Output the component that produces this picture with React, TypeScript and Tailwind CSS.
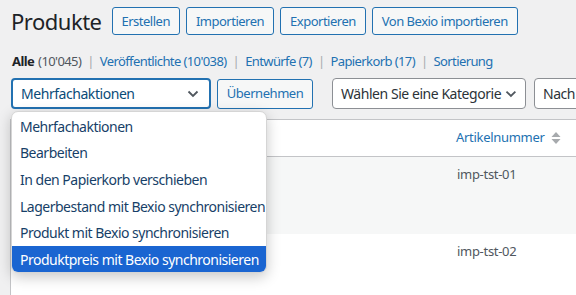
import React from "react";

const Chevron = ({ className = "" }: { className?: string }) => (
  <svg width="20" height="20" viewBox="0 0 20 20" className={className}>
    <path d="M5.5 7.5l4.5 4.5 4.5-4.5" fill="none" stroke="#50575e" strokeWidth="1.8" />
  </svg>
);

const items = [
  "Mehrfachaktionen",
  "Bearbeiten",
  "In den Papierkorb verschieben",
  "Lagerbestand mit Bexio synchronisieren",
  "Produkt mit Bexio synchronisieren",
  "Produktpreis mit Bexio synchronisieren",
];

const Sep = () => <span className="mx-[6px] text-[#a7aaad]">|</span>;

export default function App() {
  return (
    <div
      className="relative w-[576px] h-[295px] overflow-hidden bg-[#f0f0f1] text-[#1d2327]"
      style={{ fontFamily: '"Noto Sans", "Open Sans", sans-serif' }}
    >
      {/* Header */}
      <div className="flex items-center pl-[11px] pt-[7px] h-[35px]">
        <h1 className="text-[22px] leading-[28px] tracking-[-0.5px] mr-[10px] shrink-0">Produkte</h1>
        <div className="flex gap-[6px] shrink-0">
          {["Erstellen", "Importieren", "Exportieren", "Von Bexio importieren"].map((b) => (
            <button
              key={b}
              className="h-[28px] px-[9px] border border-[#2271b1] rounded-[3px] bg-[#f6f7f7] text-[#2271b1] text-[13px] tracking-[-0.5px] leading-none whitespace-nowrap shrink-0"
            >
              {b}
            </button>
          ))}
        </div>
      </div>

      {/* subsubsub */}
      <div className="flex items-center pl-[12px] mt-[17px] h-[20px] text-[13px] tracking-[-0.6px] whitespace-nowrap">
        <span className="font-bold text-[#1d2327]">Alle</span>
        <span className="ml-[4px] text-[#50575e]">(10'045)</span>
        <Sep />
        <span className="text-[#2271b1]">Veröffentlichte (10'038)</span>
        <Sep />
        <span className="text-[#2271b1]">Entwürfe (7)</span>
        <Sep />
        <span className="text-[#2271b1]">Papierkorb (17)</span>
        <Sep />
        <span className="text-[#2271b1]">Sortierung</span>
      </div>

      {/* tablenav */}
      <div className="flex items-center mt-[6px] pl-[11px] h-[31px]">
        <div className="w-[200px] h-[31px] shrink-0 flex items-center justify-between pl-[8px] pr-[6px] bg-white border-2 border-[#2271b1] rounded-[4px] text-[14px] tracking-[-0.45px] text-[#0a4b78]">
          <span className="whitespace-nowrap">Mehrfachaktionen</span>
          <Chevron />
        </div>
        <button className="ml-[6px] w-[96px] h-[30px] shrink-0 border border-[#2271b1] rounded-[3px] bg-[#f6f7f7] text-[#2271b1] text-[13px] tracking-[-0.45px] whitespace-nowrap">
          Übernehmen
        </button>
        <div className="ml-[19px] w-[194px] h-[31px] flex items-center justify-between pl-[8px] pr-[4px] bg-white border border-[#8c8f94] rounded-[4px] text-[14px] tracking-[-0.45px] text-[#2c3338] shrink-0">
          <span className="whitespace-nowrap">Wählen Sie eine Kategorie</span>
          <Chevron />
        </div>
        <div className="ml-[8px] w-[120px] h-[31px] flex items-center pl-[8px] bg-white border border-[#8c8f94] rounded-[4px] text-[14px] tracking-[-0.45px] text-[#2c3338] shrink-0">
          <span>Nach</span>
        </div>
      </div>

      {/* Table */}
      <div className="ml-[10px] mt-[10px] w-[600px] border border-[#c3c4c7] bg-white">
        <div className="h-[37px] border-b border-[#c3c4c7] flex items-center">
          <div className="ml-[445px] flex items-center text-[13px] tracking-[-0.3px] text-[#2271b1]">
            Artikelnummer
            <svg width="12" height="16" viewBox="0 0 12 16" className="ml-[5px]">
              <path d="M6 2l4.5 5h-9z" fill="#a7aaad" />
              <path d="M6 14l4.5-5h-9z" fill="#a7aaad" />
            </svg>
          </div>
        </div>
        <div className="h-[77px] bg-[#f6f7f7]">
          <div className="ml-[446px] pt-[8px] text-[13px] tracking-[-0.3px] text-[#50575e]">imp-tst-01</div>
        </div>
        <div className="h-[77px] bg-white">
          <div className="ml-[446px] pt-[8px] text-[13px] tracking-[-0.3px] text-[#50575e]">imp-tst-02</div>
        </div>
      </div>

      {/* Dropdown */}
      <div className="absolute left-[11px] top-[111px] w-[256px] h-[162px] bg-white rounded-[7px] border border-[#d5d5d5] shadow-[0_4px_14px_rgba(0,0,0,0.22)] overflow-hidden pt-[1px]">
        {items.map((it, i) => (
          <div
            key={it}
            className={`h-[26.6px] flex items-center pl-[8px] text-[14px] tracking-[-0.5px] whitespace-nowrap ${
              i === items.length - 1 ? "bg-[#1a65d1] text-white" : "text-[#173f68]"
            }`}
          >
            {it}
          </div>
        ))}
      </div>
    </div>
  );
}
